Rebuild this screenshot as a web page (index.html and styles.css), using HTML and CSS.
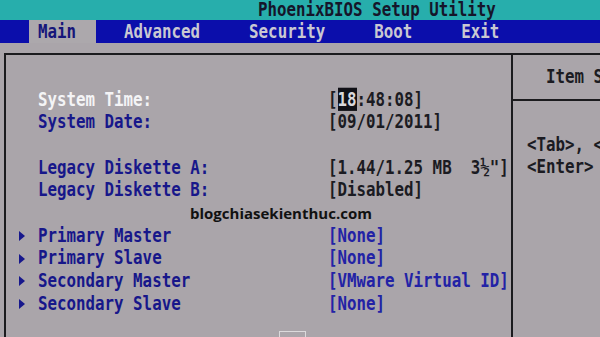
FILE: index.html
```html
<!DOCTYPE html>
<html lang="en">
<head>
    <meta charset="UTF-8">
    <meta name="viewport" content="width=device-width, initial-scale=1.0">
    <title>PhoenixBIOS Setup Utility</title>
    <link rel="stylesheet" href="styles.css">
</head>
<body>
    <div class="screen">
        <div class="title-bar"><span class="txt">PhoenixBIOS Setup Utility</span></div>

        <div class="menu">
            <span class="tab active"><span class="txt">Main</span></span>
            <span class="tab"><span class="txt">Advanced</span></span>
            <span class="tab"><span class="txt">Security</span></span>
            <span class="tab"><span class="txt">Boot</span></span>
            <span class="tab"><span class="txt">Exit</span></span>
        </div>

        <div class="frame">
            <div class="panel">
                <div class="row">
                    <span class="lead"></span>
                    <span class="label txt white">System Time:</span>
                    <span class="value txt">[<span class="hl">18</span>:48:08]</span>
                </div>
                <div class="row">
                    <span class="lead"></span>
                    <span class="label txt">System Date:</span>
                    <span class="value txt">[09/01/2011]</span>
                </div>
                <div class="row"></div>
                <div class="row">
                    <span class="lead"></span>
                    <span class="label txt">Legacy Diskette A:</span>
                    <span class="value txt">[1.44/1.25 MB  3½"]</span>
                </div>
                <div class="row">
                    <span class="lead"></span>
                    <span class="label txt">Legacy Diskette B:</span>
                    <span class="value txt">[Disabled]</span>
                </div>
                <div class="row watermark">blogchiasekienthuc.com</div>
                <div class="row">
                    <span class="lead"><svg class="arrow" viewBox="0 0 6 10"><polygon points="0,0 6,5 0,10"/></svg></span>
                    <span class="label txt">Primary Master</span>
                    <span class="value txt blue">[None]</span>
                </div>
                <div class="row">
                    <span class="lead"><svg class="arrow" viewBox="0 0 6 10"><polygon points="0,0 6,5 0,10"/></svg></span>
                    <span class="label txt">Primary Slave</span>
                    <span class="value txt blue">[None]</span>
                </div>
                <div class="row">
                    <span class="lead"><svg class="arrow" viewBox="0 0 6 10"><polygon points="0,0 6,5 0,10"/></svg></span>
                    <span class="label txt">Secondary Master</span>
                    <span class="value txt blue">[VMware Virtual ID]</span>
                </div>
                <div class="row">
                    <span class="lead"><svg class="arrow" viewBox="0 0 6 10"><polygon points="0,0 6,5 0,10"/></svg></span>
                    <span class="label txt">Secondary Slave</span>
                    <span class="value txt blue">[None]</span>
                </div>
            </div>

            <div class="help">
                <div class="help-head"><span class="txt">Item Specific Help</span></div>
                <div class="help-body">
                    <div class="help-line"><span class="txt">&lt;Tab&gt;, &lt;Shift-Tab&gt;, or</span></div>
                    <div class="help-line"><span class="txt">&lt;Enter&gt; selects field.</span></div>
                </div>
            </div>
        </div>

        <div class="dialog-edge"></div>
    </div>
</body>
</html>
```

FILE: styles.css
```css
body {
    margin: 0;
    background: #aaa5aa;
}
.screen {
    position: relative;
    width: 600px;
    height: 337px;
    overflow: hidden;
    display: flex;
    flex-direction: column;
    background: #aaa5aa;
    font-family: "DejaVu Sans Mono", monospace;
    font-size: 15.8px;
    font-weight: bold;
}
.txt {
    display: inline-block;
    white-space: pre;
    transform: scaleY(1.22);
}
.title-bar {
    height: 20px;
    line-height: 20px;
    padding-left: 258px;
    background: #27aeac;
    color: #15152a;
}
.menu {
    height: 23px;
    line-height: 23px;
    display: flex;
    gap: 31px;
    background: #0b0eab;
    color: #c9c8d2;
}
.tab {
    padding: 0 9px;
}
.tab.active {
    width: 49px;
    margin-left: 29px;
    margin-right: -12px;
    background: #aca8ac;
    color: #16167a;
}
.frame {
    flex: 1;
    width: 620px;
    margin: 10px 0 0 4px;
    border-top: 2px solid #1b1b1e;
    border-left: 2px solid #1b1b1e;
    display: grid;
    grid-template-columns: 505px 1fr;
}
.panel {
    padding-top: 33.6px;
}
.row {
    display: grid;
    grid-template-columns: 32px 290px auto;
    align-items: center;
    height: 22.7px;
    line-height: 22.7px;
}
.lead {
    display: flex;
    align-items: center;
    padding-left: 13px;
}
.arrow {
    width: 6px;
    height: 10px;
    fill: #17178c;
}
.label {
    color: #17178a;
}
.label.white {
    color: #f4f4f6;
}
.value {
    color: #1b1b22;
}
.value.blue {
    color: #2222a6;
}
.hl {
    background: #101016;
    color: #d8d8dc;
}
.watermark {
    display: block;
    padding-left: 184px;
    font-family: "Open Sans", sans-serif;
    font-size: 15px;
    font-weight: bold;
    color: #111;
}
.help {
    border-left: 2px solid #1b1b1e;
}
.help-head {
    height: 44px;
    line-height: 44px;
    padding-left: 33px;
    border-bottom: 2px solid #1b1b1e;
    color: #1b1b22;
}
.help-body {
    padding: 32.6px 0 0 14px;
    color: #1b1b22;
}
.help-line {
    height: 22.7px;
    line-height: 22.7px;
}
.dialog-edge {
    position: absolute;
    left: 279px;
    top: 331px;
    width: 25px;
    height: 12px;
    border: 1px solid #dcdadc;
}
```
